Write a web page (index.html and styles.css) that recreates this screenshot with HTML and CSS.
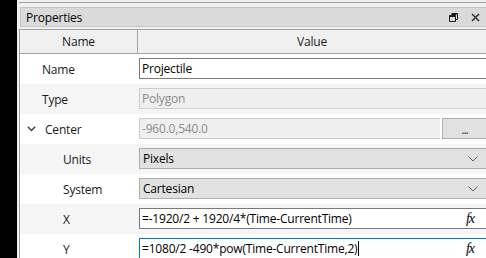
FILE: index.html
```html
<!DOCTYPE html>
<html lang="en">
<head>
    <meta charset="UTF-8">
    <title>Properties</title>
    <link rel="stylesheet" href="styles.css">
</head>
<body>
    <div class="app">
        <div class="dock-edge"></div>
        <div class="main">
            <div class="topbar"></div>

            <div class="panel-title">
                <span>Properties</span>
                <div class="title-btns">
                    <svg width="9" height="9" viewBox="0 0 9 9">
                        <path d="M2.5 0.5h6v6h-2M0.5 2.5h6v6h-6z M2.5 1.5h5" fill="none" stroke="#1a1a1a" stroke-width="1"/>
                        <path d="M0.5 3.5h6" stroke="#1a1a1a" stroke-width="1"/>
                    </svg>
                    <svg width="9" height="9" viewBox="0 0 9 9">
                        <path d="M1 1l7 7M8 1l-7 7" stroke="#333" stroke-width="1.6"/>
                    </svg>
                </div>
            </div>

            <div class="table">
                <div class="table-head">
                    <div class="head-cell name-col">Name</div>
                    <div class="head-cell">Value</div>
                </div>

                <div class="row">
                    <div class="label">Name</div>
                    <div class="value"><div class="field">Projectile</div></div>
                </div>
                <div class="row alt">
                    <div class="label">Type</div>
                    <div class="value"><div class="field readonly">Polygon</div></div>
                </div>
                <div class="row">
                    <div class="label">
                        <svg class="expander" width="9" height="6" viewBox="0 0 9 6">
                            <path d="M0.8 0.8l3.7 3.7 3.7-3.7" fill="none" stroke="#404040" stroke-width="1.5"/>
                        </svg>
                        Center
                    </div>
                    <div class="value">
                        <div class="field readonly">-960.0,540.0</div>
                        <div class="dots-btn">...</div>
                    </div>
                </div>
                <div class="row alt">
                    <div class="label child">Units</div>
                    <div class="value">
                        <div class="combo">
                            <span>Pixels</span>
                            <svg width="10" height="6" viewBox="0 0 10 6"><path d="M0.5 0.5l4.5 4.5 4.5-4.5" fill="none" stroke="#606060" stroke-width="1"/></svg>
                        </div>
                    </div>
                </div>
                <div class="row">
                    <div class="label child">System</div>
                    <div class="value">
                        <div class="combo">
                            <span>Cartesian</span>
                            <svg width="10" height="6" viewBox="0 0 10 6"><path d="M0.5 0.5l4.5 4.5 4.5-4.5" fill="none" stroke="#606060" stroke-width="1"/></svg>
                        </div>
                    </div>
                </div>
                <div class="row alt">
                    <div class="label child">X</div>
                    <div class="value">
                        <div class="field formula">
                            <span>=-1920/2 + 1920/4*(Time-CurrentTime)</span>
                            <span class="fx">fx</span>
                        </div>
                    </div>
                </div>
                <div class="row">
                    <div class="label child">Y</div>
                    <div class="value">
                        <div class="field formula focused">
                            <span>=1080/2 -490*pow(Time-CurrentTime,2)<span class="caret"></span></span>
                            <span class="fx">fx</span>
                        </div>
                    </div>
                </div>
            </div>
        </div>
    </div>
</body>
</html>
```

FILE: styles.css
```css
body {
    margin: 0;
    font-family: 'Open Sans', 'Noto Sans', sans-serif;
    font-size: 12px;
    letter-spacing: -0.2px;
    color: #000;
    background: #f0f0f0;
}

.app {
    display: flex;
    height: 258px;
    overflow: hidden;
}

.dock-edge {
    width: 17px;
    background: #000;
}

.main {
    flex: 1;
    min-width: 0;
    padding-left: 2px;
    background: #f0f0f0;
}

.topbar {
    height: 2px;
    border-bottom: 1px solid #a0a0a0;
}

.panel-title {
    box-sizing: border-box;
    height: 20px;
    margin: 4px 0 0 1px;
    padding-left: 5px;
    display: flex;
    align-items: center;
    justify-content: space-between;
    background: #dadada;
    border: 1px solid #c4c4c4;
    border-right: none;
    color: #000;
}

.title-btns {
    display: flex;
    align-items: center;
    gap: 13px;
    padding-right: 6px;
}

.title-btns svg {
    display: block;
}

.table {
    margin-top: 2px;
    border-left: 1px solid #a0a0a0;
}

.table-head {
    display: grid;
    grid-template-columns: 118px 1fr;
    height: 25px;
    box-sizing: border-box;
    border-top: 1px solid #a0a0a0;
    border-bottom: 1px solid #a0a0a0;
    background: #f0f0f0;
}

.head-cell {
    display: flex;
    align-items: center;
    justify-content: center;
    color: #1a1a1a;
}

.name-col {
    border-right: 1px solid #a8a8a8;
}

.row {
    display: grid;
    grid-template-columns: 119px 1fr;
    height: 30px;
    background: #fff;
}

.row.alt {
    background: #f5f5f5;
}

.label {
    display: flex;
    align-items: center;
    padding-left: 22px;
    color: #1a1a1a;
}

.label.child {
    padding-left: 43px;
}

.expander {
    margin: 0 9px 0 -15px;
}

.value {
    display: flex;
    padding-top: 4px;
}

.field {
    flex: 1;
    box-sizing: border-box;
    height: 21px;
    padding-left: 2px;
    line-height: 19px;
    white-space: nowrap;
    background: #fff;
    border: 1px solid #7a7a7a;
    border-right: none;
}

.field.readonly {
    background: #efefef;
    border-color: #cccccc;
    color: #8c8c8c;
}

.dots-btn {
    box-sizing: border-box;
    width: 44px;
    height: 21px;
    margin-left: 2px;
    line-height: 22px;
    text-align: center;
    letter-spacing: -1px;
    background: #e1e1e1;
    border: 1px solid #adadad;
    border-right: none;
    color: #333;
}

.combo {
    flex: 1;
    box-sizing: border-box;
    height: 21px;
    padding: 0 8px 0 3px;
    display: flex;
    align-items: center;
    justify-content: space-between;
    background: #e1e1e1;
    border: 1px solid #adadad;
    border-right: none;
}

.formula {
    display: flex;
    justify-content: space-between;
    padding-right: 12px;
}

.field.focused {
    border-color: #0078d7;
}

.caret {
    display: inline-block;
    width: 1px;
    height: 15px;
    margin-left: 1px;
    vertical-align: -3px;
    background: #000;
}

.fx {
    font-family: 'Liberation Serif', serif;
    font-style: italic;
    font-size: 14px;
    letter-spacing: -1px;
}
```
